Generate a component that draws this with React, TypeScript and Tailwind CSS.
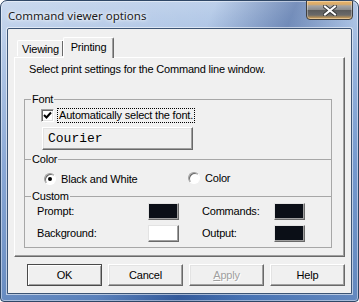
import React from "react";

function Btn({ children, def, disabled }: { children: React.ReactNode; def?: boolean; disabled?: boolean }) {
  return (
    <div
      className={
        def
          ? "w-[75px] h-[22px] flex items-center justify-center bg-[#f0f0f0] border border-[#4a4a4a] shadow-[inset_1px_1px_0_#ffffff,inset_-1px_-1px_0_#a0a0a0]"
          : "w-[75px] h-[22px] flex items-center justify-center bg-[#f0f0f0] border border-t-white border-l-white border-r-[#696969] border-b-[#696969] shadow-[inset_-1px_-1px_0_#a0a0a0,inset_1px_1px_0_#e3e3e3]"
      }
    >
      <span className={disabled ? "text-[#a0a0a0] [text-shadow:1px_1px_0_#ffffff]" : "text-black"}>{children}</span>
    </div>
  );
}

function Swatch({ white }: { white?: boolean }) {
  return (
    <div
      className={
        white
          ? "w-[31px] h-[17px] bg-white border border-t-[#e3e3e3] border-l-[#e3e3e3] border-r-[#696969] border-b-[#696969] shadow-[inset_-1px_-1px_0_#a0a0a0]"
          : "w-[31px] h-[17px] bg-[#0b0f17] border border-t-[#e3e3e3] border-l-[#e3e3e3] border-r-[#696969] border-b-[#696969] shadow-[inset_-1px_-1px_0_#a0a0a0]"
      }
    />
  );
}

function Radio({ checked }: { checked?: boolean }) {
  return (
    <div className="w-[12px] h-[12px] rounded-full border border-t-[#a0a0a0] border-l-[#a0a0a0] border-r-white border-b-white bg-white shadow-[inset_1px_1px_0_#696969] flex items-center justify-center">
      {checked ? <div className="w-[4px] h-[4px] rounded-full bg-black" /> : null}
    </div>
  );
}

export default function App() {
  return (
    <div className="w-[359px] h-[302px] bg-white font-['Liberation_Sans',Arial,sans-serif] text-[11px] leading-[13px] tracking-[-0.2px] text-black">
      <div className="relative w-[359px] h-[302px] rounded-t-[7px] rounded-b-[4px] border border-[#2f4766] overflow-hidden bg-[linear-gradient(112deg,rgba(255,255,255,0.28)_0%,rgba(255,255,255,0.10)_45%,rgba(20,50,115,0.38)_62%,rgba(255,255,255,0)_76%,rgba(255,255,255,0.16)_100%),linear-gradient(180deg,#b6cbe8_0%,#93b1dc_22%,#6990ca_55%,#4672b3_100%)] shadow-[inset_0_0_0_1px_rgba(255,255,255,0.45)]">
        {/* Title bar */}
        <div className="h-[27px] pl-[7px] pt-[2px] flex items-center">
          <span className="font-['Noto_Sans',sans-serif] text-[11.5px] tracking-normal text-[#1b1b1b] [text-shadow:0_0_6px_#ffffff,0_0_3px_#ffffff]">
            Command viewer options
          </span>
        </div>
        {/* Close button */}
        <div className="absolute right-[5px] -top-px w-[47px] h-[20px] rounded-b-[4px] border border-[#3f3f3f] bg-[linear-gradient(180deg,#e8b468_0%,#d9ab6a_18%,#a3a3a3_28%,#8c8c8c_48%,#5c5c5c_52%,#6a6a6a_78%,#e0a64e_100%)] shadow-[inset_0_0_0_1px_rgba(255,255,255,0.35)] flex items-center justify-center">
          <svg width="14" height="11" viewBox="0 0 14 11">
            <path d="M2 1.5 L12 9.5 M12 1.5 L2 9.5" stroke="#3a3a3a" strokeWidth="4" strokeLinecap="square" />
            <path d="M2 1.5 L12 9.5 M12 1.5 L2 9.5" stroke="#ffffff" strokeWidth="2" strokeLinecap="square" />
          </svg>
        </div>

        {/* Client area */}
        <div className="ml-[6px] w-[345px] h-[266px] bg-[#f0f0f0] border border-[#3c5474] rounded-t-[2px] shadow-[0_0_0_1px_rgba(255,255,255,0.55)] flex flex-col">
          {/* Tabs */}
          <div className="h-[28px] pl-[9px] flex items-end shrink-0">
            <div className="w-[46px] h-[16px] border-l border-t border-white rounded-tl-[2px] shadow-[inset_-1px_0_0_#696969] flex items-center justify-center pt-[2px] mb-[1px]">
              Viewing
            </div>
            <div className="relative z-10 -mb-px w-[51px] h-[21px] bg-[#f0f0f0] border-l border-t border-white border-r border-r-[#696969] rounded-t-[2px] shadow-[inset_-1px_0_0_#a0a0a0] flex items-start justify-center pt-[3px]">
              Printing
            </div>
          </div>
          {/* Panel */}
          <div className="ml-[6px] w-[331px] h-[200px] shrink-0 border border-t-white border-l-white border-r-[#696969] border-b-[#696969] shadow-[inset_-1px_-1px_0_#a0a0a0] flex flex-col">
            <div className="ml-[14px] mt-[5px]">Select print settings for the Command line window.</div>
            {/* Group box */}
            <div className="ml-[9px] mt-[23px] w-[308px] border-l border-r border-b border-[#a7a7a7] flex flex-col">
              {/* Font */}
              <div className="relative h-[60px] border-t border-[#a7a7a7] flex flex-col">
                <span className="absolute -top-[7px] left-[6px] px-px bg-[#f0f0f0]">Font</span>
                <div className="mt-[8px] ml-[16px] h-[15px] flex items-center">
                  <div className="w-[13px] h-[13px] border border-t-[#a0a0a0] border-l-[#a0a0a0] border-r-white border-b-white bg-white shadow-[inset_1px_1px_0_#696969,inset_-1px_-1px_0_#e3e3e3] flex items-center justify-center">
                    <svg width="9" height="9" viewBox="0 0 9 9">
                      <path d="M1 4 L3.5 6.5 L8 1.5" stroke="#000" strokeWidth="2" fill="none" />
                    </svg>
                  </div>
                  <div className="ml-[3px] h-[15px] px-[1px] border border-dotted border-black flex items-center">
                    Automatically select the font.
                  </div>
                </div>
                <div className="ml-[17px] mt-[4px] w-[151px] h-[23px] flex items-center pl-[5px] border border-t-white border-l-white border-r-[#696969] border-b-[#696969] shadow-[inset_-1px_-1px_0_#a0a0a0,inset_1px_1px_0_#e3e3e3] font-['Liberation_Mono',monospace] text-[13px] tracking-normal">
                  Courier
                </div>
              </div>
              {/* Color */}
              <div className="relative h-[37px] border-t border-[#a7a7a7] flex flex-col">
                <span className="absolute -top-[7px] left-[6px] px-px bg-[#f0f0f0]">Color</span>
                <div className="mt-[12px] ml-[19px] h-[14px] flex items-center">
                  <div className="w-[144px] flex items-center">
                    <Radio checked />
                    <span className="ml-[5px]">Black and White</span>
                  </div>
                  <div className="flex items-center -mt-[2px]">
                    <Radio />
                    <span className="ml-[5px]">Color</span>
                  </div>
                </div>
              </div>
              {/* Custom */}
              <div className="relative h-[51px] border-t border-[#a7a7a7] flex flex-col">
                <span className="absolute -top-[7px] left-[6px] px-px bg-[#f0f0f0]">Custom</span>
                <div className="mt-[6px] ml-[12px] grid grid-cols-[111px_54px_72px_31px] grid-rows-[17px_17px] gap-y-[5px] items-center">
                  <span>Prompt:</span>
                  <Swatch />
                  <span>Commands:</span>
                  <Swatch />
                  <span>Background:</span>
                  <Swatch white />
                  <span>Output:</span>
                  <Swatch />
                </div>
              </div>
            </div>
          </div>
          {/* Buttons */}
          <div className="ml-[19px] mt-[7px] flex gap-[6px] shrink-0">
            <Btn def>OK</Btn>
            <Btn>Cancel</Btn>
            <Btn disabled>
              <span className="underline">A</span>pply
            </Btn>
            <Btn>Help</Btn>
          </div>
        </div>
      </div>
    </div>
  );
}
